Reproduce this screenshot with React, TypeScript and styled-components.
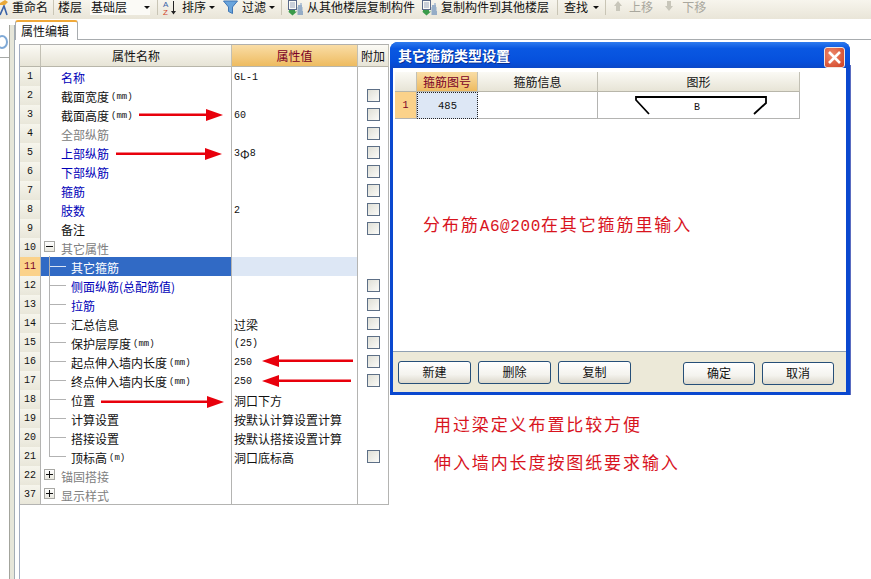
import React from "react";
import styled, { createGlobalStyle } from "styled-components";

const CJK = `"Noto Sans CJK SC", "Liberation Sans", sans-serif`;
const MONO = `"Liberation Mono", "Noto Sans CJK SC", monospace`;

const Global = createGlobalStyle`
  html, body { margin: 0; padding: 0; background: #fff; }
  body { font-family: ${CJK}; font-size: 12px; color: #111; }
`;

const Page = styled.div`
  position: relative;
  width: 871px;
  height: 579px;
  overflow: hidden;
  background: #fff;
  display: flex;
  flex-direction: column;
`;

/* ---------- toolbar ---------- */
const Toolbar = styled.div`
  flex: none;
  height: 19px;
  display: flex;
  align-items: flex-start;
  background: linear-gradient(#f7f5ed, #e9e5d8);
`;
const ToolLabel = styled.span<{ $ml?: number; $off?: boolean }>`
  flex: none;
  margin-left: ${(p) => p.$ml ?? 0}px;
  height: 13px;
  line-height: 13px;
  color: ${(p) => (p.$off ? "#a9a79d" : "#111")};
  white-space: nowrap;
`;
const ToolSep = styled.span<{ $ml: number }>`
  flex: none;
  width: 1px;
  height: 15px;
  margin-left: ${(p) => p.$ml}px;
  background: #c9c5b5;
`;
const ToolCaret = styled.span<{ $ml: number }>`
  flex: none;
  margin: 6px 0 0 ${(p) => p.$ml}px;
  width: 0;
  height: 0;
  border-left: 3px solid transparent;
  border-right: 3px solid transparent;
  border-top: 3px solid #111;
`;
const FloorSelect = styled.div`
  flex: none;
  width: 60px;
  height: 15px;
  margin-left: 8px;
  padding-left: 1px;
  box-sizing: border-box;
  background: #fbfaf6;
  display: flex;
  line-height: 13px;
`;
const SelectCaret = styled.span`
  margin: 6px 0 0 17px;
  width: 0;
  height: 0;
  border-left: 3px solid transparent;
  border-right: 3px solid transparent;
  border-top: 3px solid #111;
`;
const ToolIcon = styled.svg<{ $ml: number }>`
  flex: none;
  display: block;
  margin-left: ${(p) => p.$ml}px;
`;

/* ---------- workspace ---------- */
const Workspace = styled.div`
  flex: 1;
  display: flex;
  min-height: 0;
`;
const SideBar = styled.div`
  flex: none;
  width: 9px;
  height: 30px;
  border-bottom: 1px solid #a6a9a6;
  display: flex;
  align-items: flex-end;
  padding-bottom: 8px;
  overflow: hidden;
`;
const SideDot = styled.span`
  display: block;
  width: 8px;
  height: 10px;
  margin-left: -4px;
  border-radius: 50%;
  border: 2px solid #7fa9d6;
`;
const Splitter = styled.div`
  flex: none;
  width: 4px;
  margin: 6px 2px 0 0;
  background: #e6e6d9;
  border-left: 1px solid #a3a49c;
  border-right: 1px solid #a3adb5;
`;
const Main = styled.div`
  flex: 1;
  min-width: 0;
  display: flex;
  flex-direction: column;
  margin-left: -2px;
`;
const TabStrip = styled.div`
  flex: none;
  height: 20px;
  margin-top: 1px;
  box-sizing: border-box;
  border-bottom: 1px solid #a8acaf;
  display: flex;
`;
const Tab = styled.div`
  width: 63px;
  height: 20px;
  box-sizing: border-box;
  border: 1px solid #a8acaf;
  border-top: 2px solid #f0a93a;
  border-bottom: none;
  border-radius: 3px 3px 0 0;
  background: #fff;
  padding-left: 5px;
  line-height: 17px;
  color: #111;
`;
const Panel = styled.div`
  flex: 1;
  margin: 4px 0 0 4px;
  border-left: 1px solid #a3adc0;
`;

/* ---------- property grid ---------- */
const COLS = "21px 191px 126px 31px";
const GridHead = styled.div`
  display: grid;
  grid-template-columns: ${COLS};
  height: 23px;
  width: 369px;
  border-top: 1px solid #b0b0ae;
  box-sizing: border-box;
`;
const HeadCell = styled.div<{ $accent?: boolean }>`
  display: flex;
  align-items: center;
  justify-content: center;
  border-right: 1px solid #c2c0b4;
  border-bottom: 1px solid #b8b6aa;
  background: ${(p) =>
    p.$accent
      ? "linear-gradient(#f9dda6, #eebb60)"
      : "linear-gradient(#fbfaf5, #e7e4d6)"};
  color: ${(p) => (p.$accent ? "#7a0026" : "#111")};
`;
const Row = styled.div`
  display: grid;
  grid-template-columns: ${COLS};
  height: 19px;
  width: 369px;
`;
const Cell = styled.div<{ $bg?: string }>`
  position: relative;
  display: flex;
  align-items: center;
  box-sizing: border-box;
  border-right: 1px solid #b4b4b2;
  border-bottom: 1px solid #b4b4b2;
  background: ${(p) => p.$bg ?? "#fff"};
  white-space: nowrap;
`;
const RowNo = styled(Cell)<{ $on?: boolean }>`
  justify-content: center;
  font-family: ${MONO};
  font-size: 10px;
  color: ${(p) => (p.$on ? "#7a0026" : "#111")};
  background: ${(p) =>
    p.$on ? "#fbd28a" : "linear-gradient(#f6f5ec, #e9e7da)"};
`;
const NameCell = styled(Cell)<{
  $level: number;
  $tone: string;
  $on?: boolean;
  $last?: boolean;
}>`
  padding: 2px 0 0 ${(p) => (p.$level === 1 ? 30 : 20)}px;
  color: ${(p) => (p.$on ? "#fff" : p.$tone)};
  background: ${(p) => (p.$on ? "#316ac5" : "#fff")};
  ${(p) =>
    p.$level === 1
      ? `
    &::before {
      content: "";
      position: absolute;
      left: 9px;
      top: 9px;
      width: 16px;
      height: 1px;
      background: ${p.$on ? "#d9e4f5" : "#b2b2b2"};
    }
    &::after {
      content: "";
      position: absolute;
      left: 8px;
      top: -1px;
      width: 1px;
      height: ${p.$last ? 11 : 20}px;
      background: #b2b2b2;
    }`
      : ""}
`;
const Fold = styled.span`
  position: absolute;
  left: 3px;
  top: 3px;
  width: 11px;
  height: 11px;
  box-sizing: border-box;
  border: 1px solid #a8a8a4;
  background: linear-gradient(#fff, #e9e8df);
  display: flex;
  align-items: center;
  justify-content: center;
`;
const FoldMark = styled.svg`
  display: block;
`;
const ValueCell = styled(Cell)<{ $on?: boolean }>`
  padding: 1px 0 0 2px;
  background: ${(p) => (p.$on ? "#dde7f5" : "#fff")};
`;
const AddCell = styled(Cell)`
  justify-content: center;
  padding-left: 1px;
`;
const Check = styled.span`
  display: block;
  width: 13px;
  height: 13px;
  box-sizing: border-box;
  border: 1px solid #5d6f86;
  background: linear-gradient(135deg, #dfdfd6, #fbfbf8);
`;
const Latin = styled.span`
  font-family: ${MONO};
  font-size: 10px;
`;
const Small = styled.span`
  font-family: ${MONO};
  font-size: 9px;
  color: inherit;
  margin-left: 2px;
`;

/* ---------- overlays ---------- */
const Arrow = styled.svg<{ $x: number; $y: number }>`
  position: absolute;
  left: ${(p) => p.$x}px;
  top: ${(p) => p.$y}px;
  display: block;
`;
const Note = styled.div<{ $x: number; $y: number }>`
  position: absolute;
  left: ${(p) => p.$x}px;
  top: ${(p) => p.$y}px;
  font-size: 17px;
  line-height: 22px;
  letter-spacing: 1.9px;
  color: #d8141e;
  white-space: nowrap;
`;
const NoteLatin = styled.span`
  font-family: "Liberation Mono", monospace;
  font-size: 16px;
  letter-spacing: 0.6px;
`;

/* ---------- dialog ---------- */
const Dialog = styled.div`
  position: absolute;
  left: 390px;
  top: 42px;
  width: 460px;
  height: 353px;
  box-sizing: border-box;
  padding: 0 4px 3px 3px;
  border-radius: 8px 8px 0 0;
  background: #0a48cf;
  display: flex;
  flex-direction: column;
  &::after {
    content: "";
    position: absolute;
    right: -1px;
    top: 23px;
    bottom: 0;
    width: 1px;
    background: #5a6cc0;
  }
`;
const TitleBar = styled.div`
  flex: none;
  height: 26px;
  margin: 0 -4px 0 -3px;
  padding: 0 5px 0 8px;
  border-radius: 8px 8px 0 0;
  background: linear-gradient(#2f7bee 0, #0a58e2 25%, #0650dc 75%, #0a48c8 100%);
  display: flex;
  align-items: center;
  justify-content: space-between;
`;
const Title = styled.span`
  font-size: 14px;
  font-weight: 700;
  color: #fff;
  text-shadow: 1px 1px 0 #0a2f90;
`;
const CloseBtn = styled.span`
  width: 21px;
  height: 21px;
  margin-top: 5px;
  box-sizing: border-box;
  border: 1px solid #f0e6e0;
  border-radius: 3px;
  background: radial-gradient(circle at 35% 35%, #ee8a6c, #cf3f22);
  display: flex;
  align-items: center;
  justify-content: center;
`;
const DialogBody = styled.div`
  flex: 1;
  min-height: 0;
  background: #fff;
  padding: 4px 2px 0;
  display: flex;
  flex-direction: column;
`;
const DCOLS = "22px 61px 120px 202px";
const DHead = styled.div`
  display: grid;
  grid-template-columns: ${DCOLS};
  width: 405px;
  height: 20px;
`;
const DRow = styled.div`
  display: grid;
  grid-template-columns: ${DCOLS};
  width: 405px;
  height: 27px;
`;
const DCell = styled(Cell)`
  justify-content: center;
`;
const DRowNo = styled(DCell)`
  font-family: ${MONO};
  font-size: 10px;
  color: #7a0026;
  background: #fbd28a;
`;
const DFocus = styled(DCell)`
  font-family: ${MONO};
  font-size: 10.5px;
  background: #dde7f5;
  border: 1px dotted #222;
`;
const Shape = styled.svg`
  display: block;
`;
const Spacer = styled.div`
  flex: 1;
`;
const DialogFooter = styled.div`
  flex: none;
  height: 41px;
  margin: 0 -2px;
  box-sizing: border-box;
  border-top: 1px solid #8fa0b2;
  background: #ece9d8;
  padding: 9px 12px 0 5px;
  display: flex;
  align-items: flex-start;
`;
const BtnGroup = styled.div<{ $right?: boolean }>`
  display: flex;
  gap: 7px;
  margin-left: ${(p) => (p.$right ? "auto" : 0)};
  margin-top: ${(p) => (p.$right ? 1 : 0)}px;
`;
const Btn = styled.div<{ $w: number }>`
  width: ${(p) => p.$w}px;
  height: 23px;
  box-sizing: border-box;
  border: 1px solid #264f78;
  border-radius: 3px;
  padding-bottom: 2px;
  background: linear-gradient(#fff, #f4f3ee 60%, #dcd8cc);
  display: flex;
  align-items: center;
  justify-content: center;
  color: #111;
`;

/* ---------- data ---------- */
const BLUE = "#0000b8";
const GRAY = "#808080";
const INK = "#111";
type R = {
  n: number;
  name: React.ReactNode;
  tone?: string;
  level?: number;
  value?: React.ReactNode;
  check?: boolean;
  fold?: "-" | "+";
  on?: boolean;
  last?: boolean;
};
const mm = <Small>(mm)</Small>;
const rows: R[] = [
  { n: 1, name: "名称", tone: BLUE, value: <Latin>GL-1</Latin> },
  { n: 2, name: <>截面宽度{mm}</>, check: true },
  { n: 3, name: <>截面高度{mm}</>, value: <Latin>60</Latin>, check: true },
  { n: 4, name: "全部纵筋", tone: GRAY, check: true },
  { n: 5, name: "上部纵筋", tone: BLUE, value: <><Latin>3</Latin>Φ<Latin>8</Latin></>, check: true },
  { n: 6, name: "下部纵筋", tone: BLUE, check: true },
  { n: 7, name: "箍筋", tone: BLUE, check: true },
  { n: 8, name: "肢数", tone: BLUE, value: <Latin>2</Latin>, check: true },
  { n: 9, name: "备注", check: true },
  { n: 10, name: "其它属性", tone: GRAY, fold: "-" },
  { n: 11, name: "其它箍筋", level: 1, on: true },
  { n: 12, name: <>侧面纵筋(总配筋值)</>, tone: BLUE, level: 1, check: true },
  { n: 13, name: "拉筋", tone: BLUE, level: 1, check: true },
  { n: 14, name: "汇总信息", level: 1, value: "过梁", check: true },
  { n: 15, name: <>保护层厚度{mm}</>, level: 1, value: <Latin> (25)</Latin>, check: true },
  { n: 16, name: <>起点伸入墙内长度{mm}</>, level: 1, value: <Latin>250</Latin>, check: true },
  { n: 17, name: <>终点伸入墙内长度{mm}</>, level: 1, value: <Latin>250</Latin>, check: true },
  { n: 18, name: "位置", level: 1, value: "洞口下方" },
  { n: 19, name: "计算设置", level: 1, value: "按默认计算设置计算" },
  { n: 20, name: "搭接设置", level: 1, value: "按默认搭接设置计算" },
  { n: 21, name: <>顶标高<Small>(m)</Small></>, level: 1, value: "洞口底标高", check: true, last: true },
  { n: 22, name: "锚固搭接", tone: GRAY, fold: "+" },
  { n: 37, name: "显示样式", tone: GRAY, fold: "+" },
];

const arrows = [
  { x: 139, y: 109, w: 84, flip: false },
  { x: 116, y: 148, w: 106, flip: false },
  { x: 262, y: 355, w: 91, flip: true },
  { x: 262, y: 375, w: 89, flip: true },
  { x: 101, y: 396, w: 123, flip: false },
];

const RedArrow = ({ x, y, w, flip }: { x: number; y: number; w: number; flip: boolean }) => (
  <Arrow $x={x} $y={y} width={w} height={12} viewBox={`0 0 ${w} 12`}>
    {flip ? (
      <>
        <polygon points={`0,6 17,0 17,12`} fill="#e8000c" />
        <rect x={15} y={4.5} width={w - 15} height={2.5} fill="#e8000c" />
      </>
    ) : (
      <>
        <polygon points={`${w},6 ${w - 17},0 ${w - 17},12`} fill="#e8000c" />
        <rect x={0} y={4.5} width={w - 15} height={2.5} fill="#e8000c" />
      </>
    )}
  </Arrow>
);

const CopyIcon = ({ ml }: { ml: number }) => (
  <ToolIcon $ml={ml} width={16} height={16} viewBox="0 0 16 16">
    <rect x="0.5" y="0.5" width="8" height="9" fill="#fbfbf6" stroke="#5a6a8a" />
    <path d="M2 3h5M2 5h5M2 7h5" stroke="#98a4bc" />
    <path d="M1 10h6v1.5H9L4.5 15.5 0 11.5h1z" fill="#3a9a4a" />
    <path d="M10 6h4M9.5 8h5M9.5 10h5M9.5 12h5.5M9.5 14h5.5" stroke="#3c6fae" />
    <path d="M12 4h2" stroke="#7c9cc4" />
  </ToolIcon>
);

export default function App() {
  return (
    <Page>
      <Global />
      <Toolbar>
        <ToolIcon $ml={0} width={8} height={16} viewBox="0 0 8 16">
          <path d="M0 15L4 6l3 9" fill="none" stroke="#3a62a8" strokeWidth="1.6" />
          <path d="M0 3l5-3 3 2-3 3H0z" fill="#e8a838" />
        </ToolIcon>
        <ToolLabel $ml={4}>重命名</ToolLabel>
        <ToolSep $ml={5} />
        <ToolLabel $ml={4}>楼层</ToolLabel>
        <FloorSelect>
          基础层
          <SelectCaret />
        </FloorSelect>
        <ToolSep $ml={7} />
        <ToolIcon $ml={4} width={16} height={16} viewBox="0 0 16 16">
          <text x="1" y="7" fontSize="8" fontFamily="Liberation Sans" fill="#3a62a8">A</text>
          <text x="1" y="15" fontSize="8" fontFamily="Liberation Sans" fill="#d0452a">Z</text>
          <path d="M11.5 1v13" stroke="#222" />
          <path d="M9 11h5l-2.5 3.5z" fill="#222" />
        </ToolIcon>
        <ToolLabel $ml={4}>排序</ToolLabel>
        <ToolCaret $ml={3} />
        <ToolIcon $ml={8} width={15} height={14} viewBox="0 0 15 14">
          <path d="M0.5 1h14L9.5 7v6.5L5.5 11.5V7z" fill="#6aa5dc" stroke="#3f76b5" />
        </ToolIcon>
        <ToolLabel $ml={4}>过滤</ToolLabel>
        <ToolCaret $ml={3} />
        <ToolSep $ml={6} />
        <CopyIcon ml={6} />
        <ToolLabel $ml={3}>从其他楼层复制构件</ToolLabel>
        <CopyIcon ml={7} />
        <ToolLabel $ml={3}>复制构件到其他楼层</ToolLabel>
        <ToolSep $ml={8} />
        <ToolLabel $ml={6}>查找</ToolLabel>
        <ToolCaret $ml={5} />
        <ToolSep $ml={6} />
        <ToolIcon $ml={7} width={10} height={12} viewBox="0 0 10 12">
          <path d="M5 1l4 5H7v5H3V6H1z" fill="#c8c6ba" />
        </ToolIcon>
        <ToolLabel $ml={6} $off>上移</ToolLabel>
        <ToolIcon $ml={11} width={10} height={12} viewBox="0 0 10 12">
          <path d="M5 11L1 6h2V1h4v5h2z" fill="#c8c6ba" />
        </ToolIcon>
        <ToolLabel $ml={8} $off>下移</ToolLabel>
      </Toolbar>

      <Workspace>
        <SideBar>
          <SideDot />
        </SideBar>
        <Splitter />
        <Main>
          <TabStrip>
            <Tab>属性编辑</Tab>
          </TabStrip>
          <Panel>
            <GridHead>
              <HeadCell />
              <HeadCell>属性名称</HeadCell>
              <HeadCell $accent>属性值</HeadCell>
              <HeadCell>附加</HeadCell>
            </GridHead>
            {rows.map((r) => (
              <Row key={r.n}>
                <RowNo $on={r.on}>{r.n}</RowNo>
                <NameCell $level={r.level ?? 0} $tone={r.tone ?? INK} $on={r.on} $last={r.last}>
                  {r.fold && (
                    <Fold>
                      <FoldMark width={7} height={7} viewBox="0 0 7 7">
                        <path d={r.fold === "+" ? "M0 3.5h7M3.5 0v7" : "M0 3.5h7"} stroke="#111" />
                      </FoldMark>
                    </Fold>
                  )}
                  {r.name}
                </NameCell>
                <ValueCell $on={r.on}>{r.value}</ValueCell>
                <AddCell>{r.check && <Check />}</AddCell>
              </Row>
            ))}
          </Panel>
        </Main>
      </Workspace>

      {arrows.map((a) => (
        <RedArrow key={a.y} {...a} />
      ))}

      <Dialog>
        <TitleBar>
          <Title>其它箍筋类型设置</Title>
          <CloseBtn>
            <svg width="15" height="15" viewBox="0 0 15 15">
              <path d="M2 2l11 11M13 2L2 13" stroke="#fff" strokeWidth="2.6" />
            </svg>
          </CloseBtn>
        </TitleBar>
        <DialogBody>
          <DHead>
            <HeadCell />
            <HeadCell $accent>箍筋图号</HeadCell>
            <HeadCell>箍筋信息</HeadCell>
            <HeadCell>图形</HeadCell>
          </DHead>
          <DRow>
            <DRowNo>1</DRowNo>
            <DFocus>485</DFocus>
            <DCell />
            <DCell>
              <Shape width="201" height="26" viewBox="0 0 201 26">
                <path
                  d="M51 22L38 8V5H168V11L156 22"
                  fill="none"
                  stroke="#000"
                  strokeWidth="1.8"
                />
                <text x="96" y="18" fontSize="10" fontFamily="Liberation Mono" fill="#111">B</text>
              </Shape>
            </DCell>
          </DRow>
          <Spacer />
          <DialogFooter>
            <BtnGroup>
              <Btn $w={73}>新建</Btn>
              <Btn $w={73}>删除</Btn>
              <Btn $w={73}>复制</Btn>
            </BtnGroup>
            <BtnGroup $right>
              <Btn $w={72}>确定</Btn>
              <Btn $w={72}>取消</Btn>
            </BtnGroup>
          </DialogFooter>
        </DialogBody>
      </Dialog>

      <Note $x={423} $y={213}>
        分布筋<NoteLatin>A6@200</NoteLatin>在其它箍筋里输入
      </Note>
      <Note $x={434} $y={413}>用过梁定义布置比较方便</Note>
      <Note $x={434} $y={451}>伸入墙内长度按图纸要求输入</Note>
    </Page>
  );
}
